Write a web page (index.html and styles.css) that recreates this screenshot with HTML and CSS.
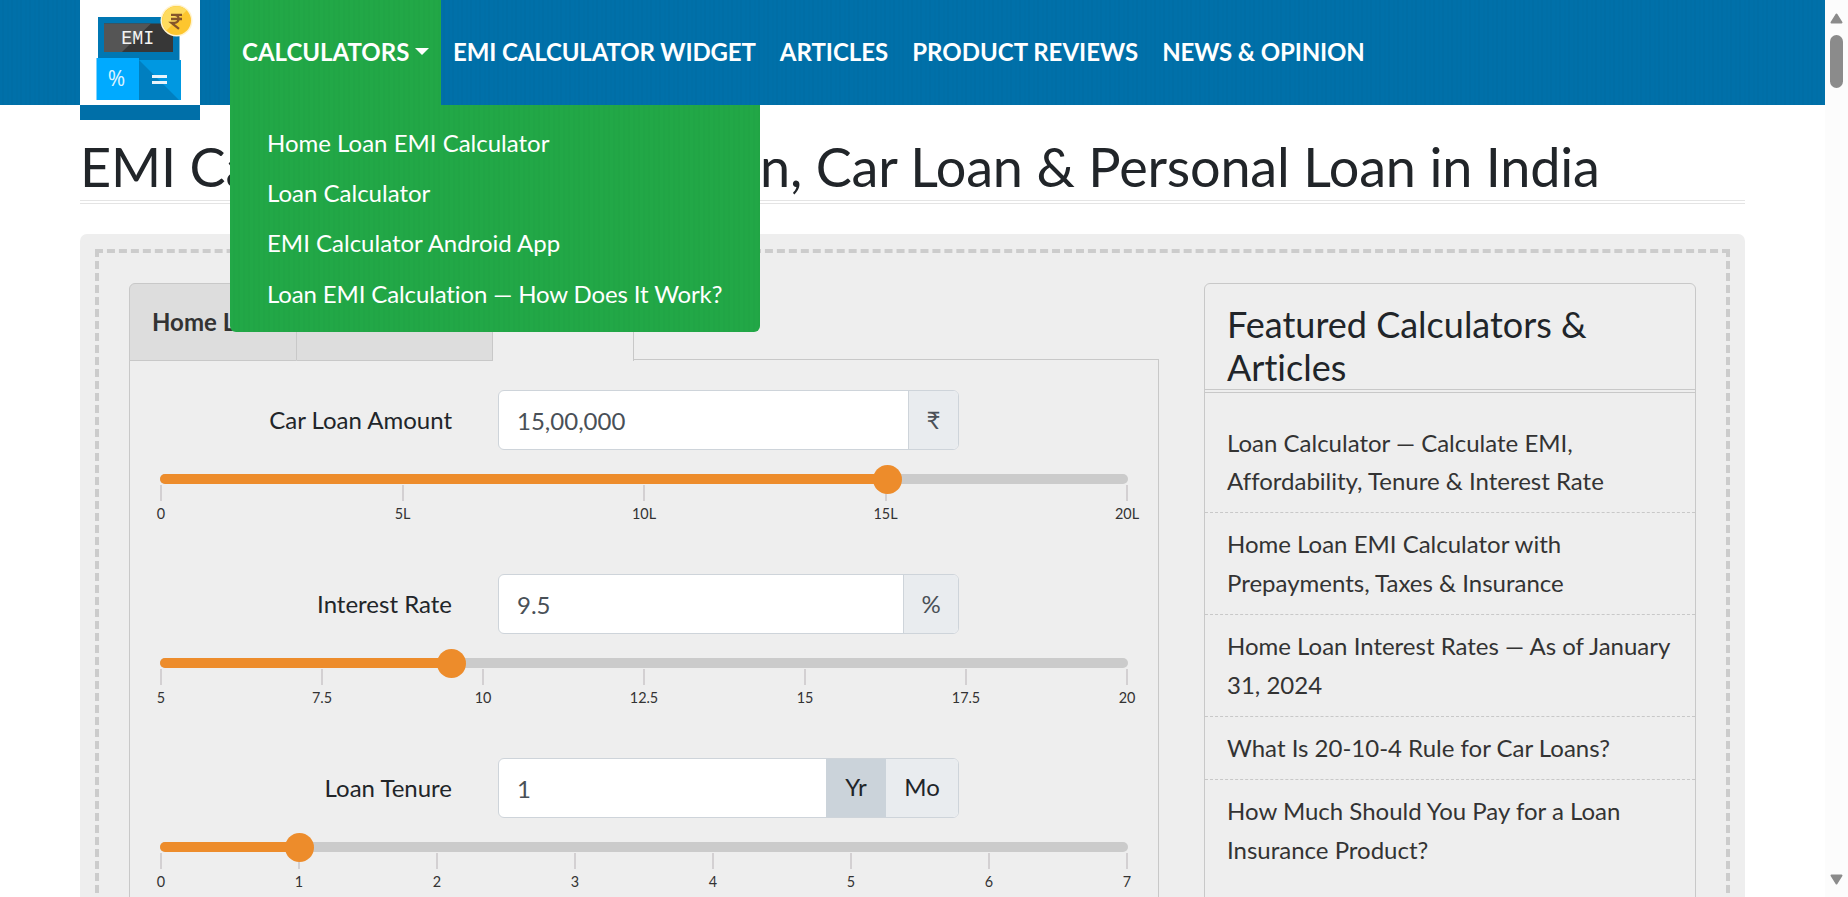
FILE: index.html
```html
<!DOCTYPE html>
<html lang="en">
<head>
<meta charset="utf-8">
<title>EMI Calculator</title>
<link rel="stylesheet" href="styles.css">
</head>
<body>
<div class="page">
  <header class="navbar">
    <a class="brand">
      <svg width="120" height="105" viewBox="0 0 120 105">
        <rect width="120" height="105" fill="#fff"/>
        <rect x="18" y="17" width="81.500" height="44" fill="#0077b3"/>
        <rect x="24" y="23.500" width="69" height="28.500" fill="#373737"/>
        <path d="M24 23.500h47L42 52H24z" fill="#555"/>
        <text x="57.700" y="43.700" text-anchor="middle" class="logo-emi" textLength="33" lengthAdjust="spacingAndGlyphs">EMI</text>
        <rect x="16.500" y="58" width="42.500" height="42" fill="#00aaff"/>
        <rect x="59" y="60" width="42" height="40" fill="#0098e1"/>
        <path d="M59 60l40 40H59z" fill="#007fc0"/>
        <text x="36.500" y="86" text-anchor="middle" class="logo-pct">%</text>
        <path d="M72 76.500h15M72 82.500h15" stroke="#e8f4fb" stroke-width="2.800"/>
        <circle cx="96.500" cy="20.500" r="16" fill="#fff3cf"/>
        <circle cx="96.500" cy="20.500" r="14.500" fill="#fdc62f"/>
        <path d="M86.200 30.700A14.500 14.500 0 0 1 106.800 10.300z" fill="#fedb5e"/>
        <path d="M91 14.800h11M91 19h11M91 14.800h3.500c5.500 0 5.500 8 0 8H91.500l7.500 6" fill="none" stroke="#85552a" stroke-width="2.300"/>
      </svg>
    </a>
    <nav class="menu">
      <div class="menu-item menu-open">
        <a class="menu-link">CALCULATORS<span class="caret"></span></a>
        <div class="dropdown">
          <a>Home Loan EMI Calculator</a>
          <a>Loan Calculator</a>
          <a>EMI Calculator Android App</a>
          <a class="long">Loan EMI Calculation — How Does It Work?</a>
        </div>
      </div>
      <div class="menu-item"><a class="menu-link tight">EMI CALCULATOR WIDGET</a></div>
      <div class="menu-item"><a class="menu-link">ARTICLES</a></div>
      <div class="menu-item"><a class="menu-link">PRODUCT REVIEWS</a></div>
      <div class="menu-item"><a class="menu-link tight">NEWS &amp; OPINION</a></div>
    </nav>
  </header>

  <main class="content">
    <h1 class="title">EMI Calculator for Home Loan, Car Loan &amp; Personal Loan in India</h1>
    <div class="panel">
      <div class="panel-inner">
        <section class="calculator">
          <div class="tabs">
            <a class="tab tab-home">Home Loan</a>
            <a class="tab tab-personal">Personal Loan</a>
            <a class="tab tab-active">Car Loan</a>
            <span class="tab-rest"></span>
          </div>
          <div class="form">
            <div class="field">
              <div class="row"><label>Car Loan Amount</label><div class="group"><span class="value">15,00,000</span><span class="addon addon-rs">₹</span></div></div>
              <div class="slider"><div class="fill" style="width:75%"></div><div class="knob" style="left:75%"></div></div>
              <div class="scale"><span>0</span><span>5L</span><span>10L</span><span>15L</span><span>20L</span></div>
            </div>
            <div class="field">
              <div class="row"><label>Interest Rate</label><div class="group"><span class="value">9.5</span><span class="addon addon-pct">%</span></div></div>
              <div class="slider"><div class="fill" style="width:30%"></div><div class="knob" style="left:30%"></div></div>
              <div class="scale"><span>5</span><span>7.5</span><span>10</span><span>12.5</span><span>15</span><span>17.5</span><span>20</span></div>
            </div>
            <div class="field">
              <div class="row"><label>Loan Tenure</label><div class="group"><span class="value">1</span><span class="addon unit unit-on">Yr</span><span class="addon unit unit-off">Mo</span></div></div>
              <div class="slider"><div class="fill" style="width:14.286%"></div><div class="knob" style="left:14.286%"></div></div>
              <div class="scale"><span>0</span><span>1</span><span>2</span><span>3</span><span>4</span><span>5</span><span>6</span><span>7</span></div>
            </div>
          </div>
        </section>
        <aside class="sidebar">
          <h3>Featured Calculators &amp; Articles</h3>
          <ul>
            <li>Loan Calculator — Calculate EMI, Affordability, Tenure &amp; Interest Rate</li>
            <li>Home Loan EMI Calculator with Prepayments, Taxes &amp; Insurance</li>
            <li>Home Loan Interest Rates — As of January 31, 2024</li>
            <li>What Is 20-10-4 Rule for Car Loans?</li>
            <li>How Much Should You Pay for a Loan Insurance Product?</li>
          </ul>
        </aside>
      </div>
    </div>
  </main>
</div>
<div class="scrollbar">
  <svg width="13" height="11" viewBox="0 0 13 11"><path d="M6.500 1.500L11.500 9.500H1.500z" fill="#8b8b8b" stroke="#8b8b8b" stroke-width="2" stroke-linejoin="round"/></svg>
  <span class="thumb"></span>
  <svg width="13" height="11" viewBox="0 0 13 11"><path d="M6.500 9.500L11.500 1.500H1.500z" fill="#8b8b8b" stroke="#8b8b8b" stroke-width="2" stroke-linejoin="round"/></svg>
</div>
</body>
</html>
```

FILE: styles.css
```css
* { box-sizing: border-box; }
html, body { margin: 0; height: 897px; overflow: hidden; }
body {
  display: flex;
  background: #fff;
  color: #212529;
  font: 400 24px/36px Lato, "Liberation Sans", sans-serif;
  font-variant-ligatures: none;
}
.page { width: 1825px; height: 897px; overflow: hidden; }

.navbar {
  display: flex;
  height: 105px;
  padding-left: 80px;
  background: repeating-linear-gradient(90deg, #0070a9 0 2px, #006ea6 2px 4px, #0070a9 4px 7px, #006fa7 7px 9px);
}
.brand { width: 120px; height: 120px; margin-right: 30px; background: #006fa8; }
.brand svg { display: block; }
.logo-emi { font: 20px "Liberation Mono", monospace; fill: #f4f4f4; }
.logo-pct { font: 21px "Noto Sans", sans-serif; fill: #d8f2ff; }
.menu { display: flex; }
.menu-item { position: relative; }
.menu-link {
  display: flex;
  align-items: center;
  height: 105px;
  padding: 0 12px 2px;
  color: #fff;
  font-weight: 700;
  white-space: nowrap;
}
.menu-open .menu-link { width: 211px; }
.menu-link.tight { letter-spacing: -0.130px; }
.menu-open, .dropdown {
  background: repeating-linear-gradient(90deg, #22a847 0 3px, #21a546 3px 5px, #22a746 5px 8px, #21a545 8px 10px);
}
.caret {
  margin-left: 6px;
  border: 7px solid transparent;
  border-top-color: #fff;
  border-bottom: 0;
}
.dropdown {
  position: absolute;
  z-index: 5;
  top: 105px;
  left: 0;
  width: 530px;
  height: 227px;
  padding: 13px 37px;
  border-radius: 0 0 6px 6px;
}
.dropdown a { display: block; height: 50.200px; line-height: 50px; color: #fff; white-space: nowrap; }
.dropdown .long { letter-spacing: -0.130px; }

.content { width: 1665px; margin-left: 80px; }
.title {
  height: 99px;
  margin: 0 0 30px;
  padding-top: 29px;
  border-bottom: 4px double #e4e4e4;
  font-weight: 400;
  font-size: 54px;
  line-height: 65px;
  letter-spacing: -0.190px;
  white-space: nowrap;
}
.panel { height: 760px; padding: 15px; border-radius: 7px; background: #eee; }
.panel-inner {
  display: flex;
  justify-content: space-between;
  height: 800px;
  padding: 30px 30px 0;
  border: 4px dashed #ccc;
}
.calculator { width: 1030px; }
.tabs { display: flex; height: 78px; }
.tab {
  height: 78px;
  padding-left: 23px;
  border: 1px solid #c8c8c8;
  border-left: 0;
  background: #ddd;
  color: #333;
  font-weight: 700;
  line-height: 76px;
  white-space: nowrap;
}
.tab-home { width: 168px; padding-left: 22px; border-left: 1px solid #c8c8c8; border-radius: 6px 0 0 0; }
.tab-personal { width: 196px; }
.tab-active { width: 141px; border-bottom: 0; background: #eee; }
.tab-rest { flex: 1; height: 77px; border-bottom: 1px solid #c8c8c8; }
.form {
  height: 700px;
  margin-top: -1px;
  padding: 30px 30px 0;
  border: 1px solid #c8c8c8;
  border-top: 0;
}
.field { height: 184px; }
.row { display: flex; align-items: center; height: 60px; }
.row label { width: 292px; margin-right: 46px; text-align: right; }
.group {
  display: flex;
  width: 461px;
  height: 60px;
  overflow: hidden;
  border: 1px solid #ced4da;
  border-radius: 6px;
  background: #fff;
}
.value { flex: 1; padding-left: 18px; color: #495057; line-height: 60px; }
.addon { border-left: 1px solid #ced4da; background: #e9ecef; color: #495057; line-height: 58px; text-align: center; }
.addon-rs { width: 50px; }
.addon-pct { width: 55px; }
.unit { border-left: 0; color: #212529; line-height: 56px; }
.unit-on { width: 60px; background: #cbd3da; }
.unit-off { width: 72px; }
.slider {
  position: relative;
  width: 968px;
  height: 10px;
  margin-top: 24px;
  border-radius: 5px;
  background: #cbcbcb;
}
.fill { height: 10px; border-radius: 5px; background: #ed8c2b; }
.knob {
  position: absolute;
  top: -9px;
  width: 29px;
  height: 29px;
  margin-left: -13px;
  border-radius: 50%;
  background: #ed8c2b;
  z-index: 2;
}
.scale { display: flex; justify-content: space-between; width: 966px; margin: 1px 0 0 1px; font-size: 14.400px; line-height: 26px; color: #333; }
.scale span { display: flex; flex-direction: column; align-items: center; width: 0; }
.scale span::before { content: ""; width: 2px; height: 16px; background: #d3d0d2; }

.sidebar { width: 492px; height: 800px; border: 1px solid #c8c8c8; border-radius: 6px 6px 0 0; }
.sidebar h3 {
  height: 109px;
  margin: 0;
  padding: 19px 22px 0;
  border-bottom: 4px double #c8c8c8;
  font-weight: 400;
  font-size: 36px;
  line-height: 43.200px;
}
.sidebar ul { margin: 18.500px 0 0; padding: 0; list-style: none; color: #333; line-height: 38.400px; }
.sidebar li { padding: 12px 22px; border-bottom: 1px dashed #c8c8c8; }
.sidebar li:last-child { border-bottom: 0; }

.scrollbar {
  display: flex;
  flex-direction: column;
  align-items: center;
  width: 23px;
  height: 897px;
  padding: 13px 0 12px;
  background: #fcfcfc;
}
.thumb { width: 13px; height: 53px; margin: 11px 0 auto; border-radius: 7px; background: #8b8b8b; }
```
